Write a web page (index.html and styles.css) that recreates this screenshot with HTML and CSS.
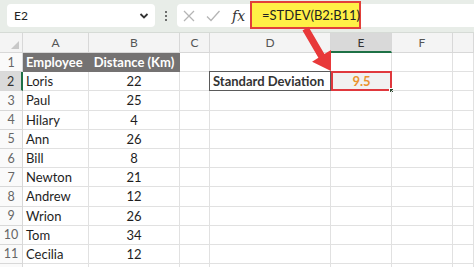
FILE: index.html
```html
<!DOCTYPE html>
<html>
<head>
<meta charset="utf-8">
<link rel="stylesheet" href="styles.css">
</head>
<body>
<div class="app">
  <div class="toolbar">
    <div class="namebox"><span class="nb-text">E2</span>
      <svg class="chev" width="10" height="8" viewBox="0 0 10 8"><path d="M1.5 2 L5 5.5 L8.5 2" fill="none" stroke="#333" stroke-width="1.8"/></svg>
    </div>
    <div class="dots"><span></span><span></span><span></span></div>
    <div class="fbox">
      <svg class="ico" width="14" height="14" viewBox="0 0 14 14"><path d="M2 2 L12 12 M12 2 L2 12" stroke="#b5b5b5" stroke-width="1.3" fill="none"/></svg>
      <svg class="ico" width="16" height="14" viewBox="0 0 16 14"><path d="M2 7.5 L6 11.5 L14.5 2" stroke="#b5b5b5" stroke-width="1.3" fill="none"/></svg>
      <span class="fx">fx</span>
      <div class="formula">=STDEV(B2:B11)</div>
    </div>
  </div>
  <div class="sheet">
    <div class="corner"><svg width="8" height="8" viewBox="0 0 8 8"><path d="M8 0 L8 8 L0 8 Z" fill="#c8c8c8"/></svg></div>
    <div class="ch">A</div><div class="ch">B</div><div class="ch">C</div><div class="ch">D</div><div class="ch sel">E</div><div class="ch">F</div><div class="ch"></div>

    <div class="rh">1</div><div class="c hd">Employee</div><div class="c hd ctr">Distance (Km)</div><div class="c"></div><div class="c"></div><div class="c"></div><div class="c"></div><div class="c"></div>
    <div class="rh sel">2</div><div class="c">Loris</div><div class="c ctr">22</div><div class="c"></div><div class="c label">Standard Deviation</div><div class="c result">9.5<span class="handle"></span></div><div class="c"></div><div class="c"></div>
    <div class="rh">3</div><div class="c">Paul</div><div class="c ctr">25</div><div class="c"></div><div class="c"></div><div class="c"></div><div class="c"></div><div class="c"></div>
    <div class="rh">4</div><div class="c">Hilary</div><div class="c ctr">4</div><div class="c"></div><div class="c"></div><div class="c"></div><div class="c"></div><div class="c"></div>
    <div class="rh">5</div><div class="c">Ann</div><div class="c ctr">26</div><div class="c"></div><div class="c"></div><div class="c"></div><div class="c"></div><div class="c"></div>
    <div class="rh">6</div><div class="c">Bill</div><div class="c ctr">8</div><div class="c"></div><div class="c"></div><div class="c"></div><div class="c"></div><div class="c"></div>
    <div class="rh">7</div><div class="c">Newton</div><div class="c ctr">21</div><div class="c"></div><div class="c"></div><div class="c"></div><div class="c"></div><div class="c"></div>
    <div class="rh">8</div><div class="c">Andrew</div><div class="c ctr">12</div><div class="c"></div><div class="c"></div><div class="c"></div><div class="c"></div><div class="c"></div>
    <div class="rh">9</div><div class="c">Wrion</div><div class="c ctr">26</div><div class="c"></div><div class="c"></div><div class="c"></div><div class="c"></div><div class="c"></div>
    <div class="rh">10</div><div class="c">Tom</div><div class="c ctr">34</div><div class="c"></div><div class="c"></div><div class="c"></div><div class="c"></div><div class="c"></div>
    <div class="rh">11</div><div class="c">Cecilia</div><div class="c ctr">12</div><div class="c"></div><div class="c"></div><div class="c"></div><div class="c"></div><div class="c"></div>
    <div class="rh"></div><div class="c"></div><div class="c"></div><div class="c"></div><div class="c"></div><div class="c"></div><div class="c"></div><div class="c"></div>
  </div>
  <svg class="arrow" width="474" height="267" viewBox="0 0 474 267">
    <path d="M302.5 30.5 L308.5 26.8 L324.4 54.0 L331 49.9 L331 71 L312.1 61.7 L318.4 57.8 Z" fill="#e8393a"/>
  </svg>
</div>
</body>
</html>
```

FILE: styles.css
```css
* { box-sizing: border-box; }
html, body { margin: 0; padding: 0; }
body {
  width: 474px;
  height: 267px;
  overflow: hidden;
  background: #fff;
  font-family: "Lato", "Liberation Sans", sans-serif;
  color: #222;
}
.app { position: relative; width: 474px; height: 267px; overflow: hidden; }

.toolbar {
  height: 33px;
  background: #e8ede8;
  display: flex;
  align-items: center;
  padding: 0 0 1px 7px;
  border-bottom: 1px solid #d6dbd6;
}
.namebox {
  width: 148px;
  height: 23px;
  background: #fff;
  border-radius: 4px;
  display: flex;
  align-items: center;
  justify-content: space-between;
  padding: 0 6px 0 7px;
  font-size: 12px;
  color: #222;
}
.dots {
  width: 22px;
  display: flex;
  flex-direction: column;
  align-items: center;
  gap: 2px;
}
.dots span { width: 2px; height: 2px; background: #444; border-radius: 50%; }
.fbox {
  flex: 1;
  height: 23px;
  background: #fff;
  border-radius: 4px 0 0 4px;
  display: flex;
  align-items: center;
  padding-left: 5px;
  gap: 9px;
  position: relative;
}
.fx {
  font-family: "DejaVu Serif", "Liberation Serif", serif;
  font-style: italic;
  font-size: 14px;
  color: #333;
  margin-left: 2px;
}
.formula {
  position: absolute;
  left: 73px;
  top: -3px;
  width: 111px;
  height: 28px;
  background: #fff046;
  border: 2px solid #e2403a;
  font-size: 13px;
  color: #222;
  display: flex;
  align-items: center;
  padding-left: 10px;
}

.sheet {
  display: grid;
  grid-template-columns: 23px 66px 91px 30px 121px 61px 61px 1fr;
  grid-template-rows: 20px repeat(12, 19.2px);
}
.corner, .ch, .rh {
  background: #f4f4f4;
  color: #555;
  border-right: 1px solid #d8d8d8;
  border-bottom: 1px solid #d8d8d8;
  font-size: 12px;
}
.corner { display: flex; align-items: flex-end; justify-content: flex-end; padding: 0 3px 3px 0; }
.ch { display: flex; align-items: center; justify-content: center; }
.ch.sel { background: #d9d9d9; border-bottom: 2px solid #1e7145; color: #333; }
.rh { display: flex; align-items: center; justify-content: center; color: #666; font-size: 12.5px; background: #fafafa; }
.rh.sel { background: #dadada; border-right: 2px solid #1e7145; color: #333; }

.c {
  border-right: 1px solid #e1e1e1;
  border-bottom: 1px solid #e1e1e1;
  font-size: 13px;
  display: flex;
  align-items: center;
  padding-left: 3px;
  color: #1e1e1e;
  white-space: nowrap;
  position: relative;
}
.c.ctr { justify-content: center; padding-left: 0; }
.c.hd { background: #747272; color: #fff; font-weight: bold; border-color: #747272; }
.c.label {
  font-weight: bold;
  color: #333;
  border: 1.5px solid #5a5a5a;
  margin: -1px 0 0 -1px;
}
.c.result {
  background: #f1f1f1;
  border: 2px solid #e0383d;
  color: #ea932d;
  font-weight: bold;
  justify-content: center;
  padding-left: 0;
  margin: -1px 0 0 0;
  overflow: visible;
}
.handle {
  position: absolute;
  right: -4px;
  bottom: -4px;
  width: 5px;
  height: 5px;
  background: #2d4a30;
  border: 1px solid #fff;
}
.arrow { position: absolute; left: 0; top: 0; pointer-events: none; }
```
